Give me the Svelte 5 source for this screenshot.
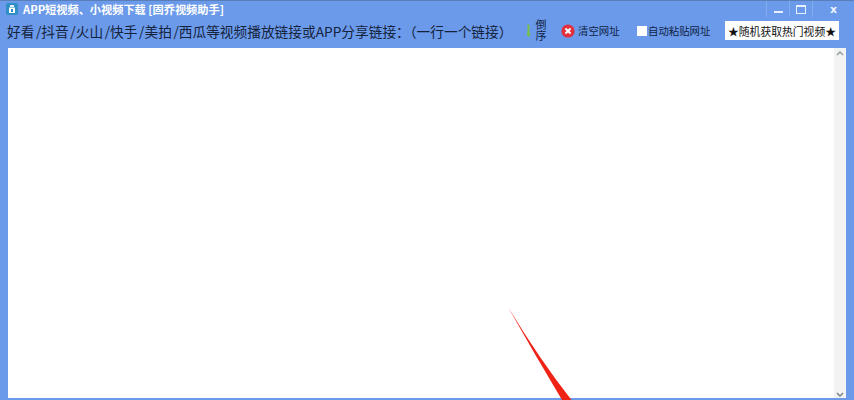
<script>
  const title = 'APP短视频、小视频下载 [固乔视频助手]';
  const sites = ['好看', '抖音', '火山', '快手', '美拍'];
  const hintEnd = '西瓜等视频播放链接或APP分享链接\uFF1A\uFF08一行一个链接\uFF09';
</script>

<div class="window">
  <header class="titlebar">
    <svg class="appicon" viewBox="0 0 12 12" width="12" height="12" aria-hidden="true">
      <rect x="0" y="0" width="12" height="12" rx="2" fill="#2f8fc4"/>
      <path d="M3 4.5h6V10H3z" fill="#fff"/>
      <rect x="4" y="2" width="4" height="2" fill="#e8f4fb"/>
      <rect x="5" y="6" width="2" height="3" fill="#2f8fc4"/>
    </svg>
    <span class="title">{title}</span>
    <div class="controls">
      <span class="ctl"><i class="min"></i></span>
      <span class="ctl"><i class="max"></i></span>
      <span class="ctl close">x</span>
    </div>
  </header>

  <div class="toolbar">
    <span class="hint">{#each sites as site}{site}<span class="sep">/</span>{/each}{hintEnd}</span>
    <span class="order">
      <svg viewBox="0 0 5 14" width="5" height="14" aria-hidden="true">
        <path d="M1.5 0.5h2v8.5h1.2L2.5 13.5 0.3 9h1.2z" fill="#79c04a"/>
      </svg>
      <span class="vertical">倒序</span>
    </span>
    <span class="clear">
      <svg viewBox="0 0 14 14" width="14" height="14" aria-hidden="true">
        <circle cx="7" cy="7" r="6.6" fill="#e0313c"/>
        <path d="M4.5 4.5l5 5m0-5l-5 5" stroke="#fff" stroke-width="2.1"/>
      </svg>
      清空网址
    </span>
    <span class="auto"><i class="check"></i>自动粘贴网址</span>
    <button class="hot">★随机获取热门视频★</button>
  </div>

  <div class="editor">
    <div class="text"></div>
    <div class="scrollbar">
      <svg viewBox="0 0 8 5" width="8" height="5" aria-hidden="true"><path d="M1 4l3-3 3 3" fill="none" stroke="#8a9a9a" stroke-width="1.4"/></svg>
      <svg viewBox="0 0 8 5" width="8" height="5" aria-hidden="true"><path d="M1 1l3 3 3-3" fill="none" stroke="#6f7f7f" stroke-width="1.4"/></svg>
    </div>
  </div>

  <svg class="arrow" viewBox="0 0 100 100" width="100" height="100" aria-hidden="true">
    <path d="M8 7 Q40 60 71.500 100 L62 100 Q35 55 8 7 Z" fill="#ee2316"/>
  </svg>
</div>

<style>
  :global(body) {
    margin: 0;
    background: #6b9aea;
  }
  .window {
    position: relative;
    width: 854px;
    height: 400px;
    overflow: hidden;
    display: flex;
    flex-direction: column;
    box-sizing: border-box;
    padding: 0 8px 2px;
    background: #6b9aea;
    font-family: "Noto Sans CJK SC", sans-serif;
    color: #0f2346;
  }
  .titlebar {
    height: 17px;
    margin: 0 -8px;
    padding: 0 0 0 6px;
    display: flex;
    align-items: center;
    gap: 5px;
    flex: none;
    box-sizing: border-box;
    border-top: 1px solid #5a7fb8;
  }
  .appicon { flex: none; }
  .title {
    font-size: 11.200px;
    font-weight: 700;
    color: #fff;
    white-space: nowrap;
  }
  .controls {
    margin-left: auto;
    display: flex;
    align-self: flex-start;
  }
  .ctl {
    width: 23px;
    height: 16px;
    display: flex;
    align-items: center;
    justify-content: center;
    border-left: 1px solid #83acee;
    box-sizing: border-box;
  }
  .close {
    width: 42px;
    color: #eef4ff;
    font: 700 11px "DejaVu Sans", sans-serif;
  }
  .min {
    display: block;
    width: 9px;
    height: 2px;
    margin-top: 5px;
    background: #e8f0ff;
  }
  .max {
    display: block;
    width: 8px;
    height: 6px;
    border: 1px solid #e8f0ff;
    border-top-width: 2px;
  }
  .toolbar {
    height: 31px;
    margin-left: -1px;
    padding-bottom: 4px;
    box-sizing: border-box;
    display: flex;
    align-items: center;
    flex: none;
    white-space: nowrap;
  }
  .hint {
    width: 519px;
    font-size: 13.700px;
    color: #15233c;
  }
  .sep {
    margin-left: 1.600px;
  }
  .order {
    width: 35px;
    display: flex;
    align-items: center;
    gap: 4px;
  }
  .vertical {
    writing-mode: vertical-rl;
    text-orientation: upright;
    font-size: 11px;
    line-height: 11px;
    letter-spacing: 0.5px;
  }
  .clear {
    width: 76px;
    display: flex;
    align-items: center;
    gap: 3px;
    font-size: 10.400px;
  }
  .auto {
    width: 88px;
    display: flex;
    align-items: center;
    gap: 1px;
    font-size: 10.400px;
  }
  .check {
    width: 10px;
    height: 10px;
    background: #fff;
    flex: none;
  }
  .hot {
    width: 114px;
    height: 19px;
    padding: 0;
    border: 0;
    background: #fff;
    color: #111;
    font: 10.800px "Noto Sans CJK SC", sans-serif;
    white-space: nowrap;
  }
  .editor {
    flex: 1;
    min-height: 0;
    display: flex;
    background: #fff;
  }
  .text { flex: 1; }
  .scrollbar {
    width: 12px;
    background: #f3f3f4;
    display: flex;
    flex-direction: column;
    justify-content: space-between;
    align-items: center;
    padding: 3px 0 1px;
    box-sizing: border-box;
  }
  .arrow {
    position: absolute;
    left: 500px;
    top: 300px;
  }
</style>
